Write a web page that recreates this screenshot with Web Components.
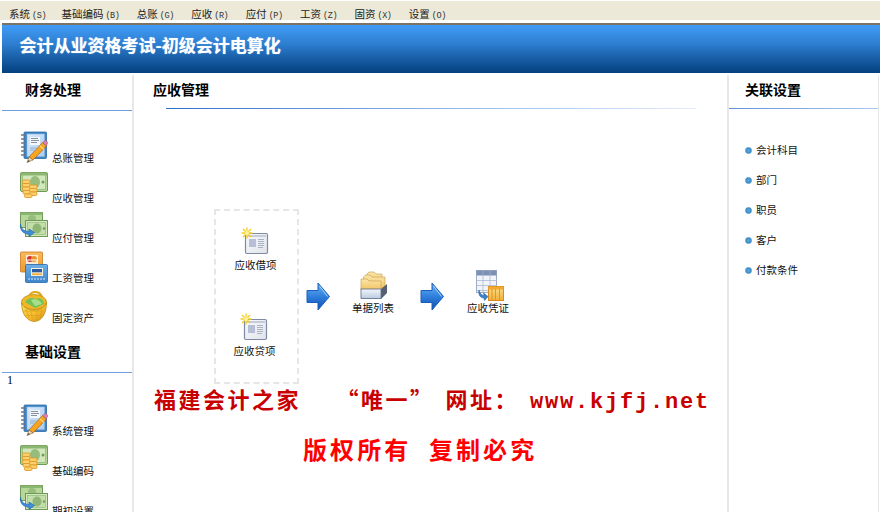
<!DOCTYPE html>
<html lang="zh-CN"><head><meta charset="utf-8"><title>会计从业资格考试</title>
<style>
html,body{margin:0;padding:0;background:#fff;width:880px;height:512px;overflow:hidden}
body{font-family:"Noto Sans CJK SC","Liberation Sans",sans-serif;color:#000}
</style></head><body>
<app-shell>
  <app-menubar slot="menu">
    <menu-entry key="S">系统</menu-entry><menu-entry key="B">基础编码</menu-entry><menu-entry key="G">总账</menu-entry><menu-entry key="R">应收</menu-entry><menu-entry key="P">应付</menu-entry><menu-entry key="Z">工资</menu-entry><menu-entry key="X">固资</menu-entry><menu-entry key="O">设置</menu-entry>
  </app-menubar>
  <app-banner slot="banner">会计从业资格考试-初级会计电算化</app-banner>
  <side-nav slot="left">
    <nav-section heading="财务处理" first>
      <nav-item icon="notebook">总账管理</nav-item>
      <nav-item icon="coins">应收管理</nav-item>
      <nav-item icon="transfer">应付管理</nav-item>
      <nav-item icon="cards">工资管理</nav-item>
      <nav-item icon="basket">固定资产</nav-item>
    </nav-section>
    <nav-section heading="基础设置" marker="1">
      <nav-item icon="notebook">系统管理</nav-item>
      <nav-item icon="coins">基础编码</nav-item>
      <nav-item icon="transfer">期初设置</nav-item>
    </nav-section>
  </side-nav>
  <work-area slot="center" heading="应收管理">
    <flow-diagram>
      <flow-group>
        <flow-node icon="newdoc" class="first">应收借项</flow-node>
        <flow-node icon="newdoc" class="second">应收贷项</flow-node>
      </flow-group>
      <flow-arrow class="a1"></flow-arrow>
      <flow-node icon="folders" class="n1">单据列表</flow-node>
      <flow-arrow class="a2"></flow-arrow>
      <flow-node icon="voucher" class="n2">应收凭证</flow-node>
    </flow-diagram>
    <notice-text>
      <span slot="one">福建会计之家　  “唯一”  网址：  </span><span slot="url">www.kjfj.net</span>
      <span slot="two">版权所有 复制必究</span>
    </notice-text>
  </work-area>
  <link-panel slot="right" heading="关联设置">
    <link-item>会计科目</link-item>
    <link-item>部门</link-item>
    <link-item>职员</link-item>
    <link-item>客户</link-item>
    <link-item>付款条件</link-item>
  </link-panel>
</app-shell>
<script>
const CJK='"Noto Sans CJK SC","Liberation Sans",sans-serif';
const ICONS={
notebook:`<defs><linearGradient id="p" x1="0" y1="0" x2="1" y2="1"><stop offset="0" stop-color="#dcebfb"/><stop offset="1" stop-color="#a9cdf0"/></linearGradient></defs>
<rect x="5" y="1" width="22.5" height="26.5" rx="1" fill="#3d84c8" stroke="#2f6aa6" stroke-width=".8"/>
<rect x="8" y="3" width="17.5" height="22.5" fill="url(#p)" stroke="#8db8e2" stroke-width=".6"/>
<rect x="11" y="6" width="10" height="8" fill="#f4f8fd"/>
<path d="M12 7.5h7M12 9.5h8M12 11.5h6" stroke="#7b8794" stroke-width=".9"/>
<path d="M11 17h6M11 19h4" stroke="#8aa6c4" stroke-width=".8"/>
<path d="M2.5 4h4M2.5 8h4M2.5 12h4M2.5 16h4M2.5 20h4M2.5 24h4" stroke="#6c7684" stroke-width="1.3" stroke-linecap="round"/>
<path d="M23.5 11.5L27.5 15L14 29L10 26Z" fill="#f6a51f" stroke="#a9621a" stroke-width=".7"/>
<path d="M21 15L25 18.3" stroke="#fde08a" stroke-width="1.1"/>
<path d="M23.5 11.5L25 10.2C26 9.4 27.3 9.6 28 10.4C28.8 11.4 28.7 12.6 28 13.4L27.5 15Z" fill="#d982ad" stroke="#a45b80" stroke-width=".6"/>
<path d="M10 26L14 29L8 31.5Z" fill="#f2dcae" stroke="#8c6a3c" stroke-width=".6"/><path d="M8 31.5l1.8-2.4 1 .8z" fill="#333"/>`,
coins:`<rect x="1.5" y="1.5" width="27" height="19" rx="1.5" fill="#b6d69a" stroke="#6e9a58"/>
<rect x="3.5" y="3.5" width="23" height="15" fill="#d2e7bb" stroke="#8db574" stroke-width=".7"/>
<rect x="1.5" y="1.5" width="27" height="3" fill="#8cb772"/>
<ellipse cx="16" cy="11" rx="5" ry="6" fill="#97bd7e"/><circle cx="24" cy="11" r="1.5" fill="#6f9a58"/>
<g fill="#fcd06a" stroke="#e09326" stroke-width=".8"><rect x="3.5" y="9" width="7.5" height="3.5" rx="1.2"/><rect x="3.5" y="12.5" width="7.5" height="3.5" rx="1.2"/><rect x="3.5" y="16" width="7.5" height="3.5" rx="1.2"/><rect x="4" y="19.5" width="7.5" height="3.5" rx="1.2"/><rect x="10.5" y="14" width="7.5" height="3.5" rx="1.2"/><rect x="10.5" y="17.5" width="7.5" height="3.5" rx="1.2"/><rect x="10.5" y="21" width="7.5" height="3.5" rx="1.2"/><rect x="5.5" y="23" width="7.5" height="3.5" rx="1.2"/></g>`,
transfer:`<rect x="1.5" y="1.5" width="22" height="15" fill="#b6d69a" stroke="#6e9a58"/>
<rect x="1.5" y="1.5" width="22" height="2.5" fill="#8cb772"/>
<ellipse cx="13" cy="8" rx="4" ry="4" fill="#97bd7e"/>
<rect x="6.5" y="9.5" width="22" height="16" fill="#d2e7bb" stroke="#6e9a58"/>
<rect x="8.5" y="11.5" width="18" height="12" fill="#c4deaa" stroke="#8db574" stroke-width=".6"/>
<ellipse cx="18" cy="17.5" rx="4.5" ry="5" fill="#8fb676"/><circle cx="25" cy="17.5" r="1.2" fill="#6f9a58"/>
<path d="M1.5 13C2 18.5 6 20.5 10 20.5V18L15.5 21.5L10 25.5V23C5 23 .5 20 1.5 13Z" fill="#3f8fdc" stroke="#2568ad" stroke-width=".7"/>`,
cards:`<defs><linearGradient id="o" x1="0" y1="0" x2="0" y2="1"><stop offset="0" stop-color="#fbb95c"/><stop offset="1" stop-color="#ee9a2c"/></linearGradient><linearGradient id="b" x1="0" y1="0" x2="0" y2="1"><stop offset="0" stop-color="#6fb0ea"/><stop offset="1" stop-color="#3d85cc"/></linearGradient></defs>
<rect x="1.5" y="1" width="22" height="20" rx="1" fill="url(#o)" stroke="#c77a1c" stroke-width=".8"/>
<rect x="7" y="4" width="12" height="9" fill="#f8e9d2"/><circle cx="11" cy="8" r="3" fill="#d4312a"/><circle cx="15" cy="8" r="3" fill="#e9932b"/>
<path d="M7 9h12" stroke="#fff" stroke-width="1"/>
<rect x="6.5" y="13.5" width="22" height="18" rx="1" fill="url(#b)" stroke="#2b6aa8" stroke-width=".8"/>
<rect x="12" y="17" width="12" height="8" fill="#f6f1df"/><rect x="13" y="18" width="10" height="3.3" fill="#2c5aa0"/><rect x="13" y="22.3" width="10" height="1.8" fill="#f1b13c"/>
<path d="M9 28h17" stroke="#d9ebfa" stroke-width="1" stroke-dasharray="2 1"/>`,
basket:`<defs><linearGradient id="y" x1="0" y1="0" x2="1" y2="1"><stop offset="0" stop-color="#fde25c"/><stop offset=".6" stop-color="#f5b82a"/><stop offset="1" stop-color="#c98a14"/></linearGradient></defs>
<path d="M9 10C9.5 3.5 13 1 16 1C20 1 23.5 4 24 11" fill="none" stroke="#e2a818" stroke-width="2.2"/>
<ellipse cx="15" cy="11" rx="12.5" ry="7.5" fill="#eeb826" stroke="#c08c14" stroke-width=".8"/>
<path d="M6 11C9 6 14 6.5 17 8C21 6 25 9 25 13L16 17Z" fill="#74c15a"/><path d="M12 9C16 7 21 9 23 13L16 15Z" fill="#a8e08a"/>
<path d="M2.5 12C3 22 6.5 29.5 15 30.5C23 30.5 27.500 22 27.5 11.5C25 17 20 19 15 19C9 19 5 16.5 2.500 12Z" fill="url(#y)" stroke="#c08c14" stroke-width=".8"/>
<path d="M7 18L10 27M12 19.5L13.5 29M18 19.5L17.5 29M23 17.5L21 27M4.5 20L24 20M6.5 24.5L23 24.5" stroke="#d99e1a" stroke-width=".6" fill="none"/>`,
newdoc:`<defs><linearGradient id="d" x1="0" y1="0" x2="1" y2="1"><stop offset="0" stop-color="#f9fafc"/><stop offset="1" stop-color="#dfe3ea"/></linearGradient></defs>
<rect x="5.5" y="7.5" width="22" height="20" rx="1.5" fill="url(#d)" stroke="#7f8aa3" stroke-width="1.2"/>
<rect x="7" y="9" width="19" height="2" fill="#c6ccda"/>
<rect x="9" y="13" width="7" height="8" fill="#b7bfd6"/>
<path d="M18 13.5h6M18 15.5h6M18 17.5h6M18 19.5h6M18 21.5h5" stroke="#9aa2b6" stroke-width=".8"/>
<g stroke="#f6cf1d" stroke-width="1.3"><path d="M7 1.5V12.5M1.5 7H12.5M3 3L11 11M11 3L3 11"/></g><circle cx="7" cy="7" r="2" fill="#fff3a8"/>`,
folders:`<defs><linearGradient id="f" x1="0" y1="0" x2="0" y2="1"><stop offset="0" stop-color="#fbe6a8"/><stop offset="1" stop-color="#f3c262"/></linearGradient><linearGradient id="t" x1="0" y1="0" x2="0" y2="1"><stop offset="0" stop-color="#f2f6fc"/><stop offset="1" stop-color="#bccbe0"/></linearGradient></defs>
<path d="M10 7V5L12 3H17L19 5H25V17H10Z" fill="url(#f)" stroke="#c9a45a" stroke-width=".7"/>
<path d="M6.5 10V8L8.5 6H13L15 8H28V19H6.5Z" fill="url(#f)" stroke="#c9a45a" stroke-width=".7"/>
<path d="M4 12V10H10L12 12H24V21H4Z" fill="url(#f)" stroke="#c9a45a" stroke-width=".7"/>
<path d="M24 20L30 15V24L24 30Z" fill="#566070"/>
<rect x="4" y="20" width="20" height="9.5" fill="url(#t)" stroke="#5a6c88" stroke-width=".8"/>`,
voucher:`<defs><linearGradient id="g" x1="0" y1="0" x2="0" y2="1"><stop offset="0" stop-color="#fbe18a"/><stop offset="1" stop-color="#f2ae3a"/></linearGradient></defs>
<rect x="4.5" y="1.5" width="20" height="22" fill="#f1f4fa" stroke="#8c9bb8" stroke-width=".8"/>
<rect x="4.5" y="1.5" width="20" height="5" fill="#7d90b5"/>
<path d="M4.5 11.5h20M4.5 16.5h20M4.5 21.5h20M11 1.5v22M18 1.5v22" stroke="#a6b2ca" stroke-width=".7" fill="none"/>
<rect x="16.5" y="17.5" width="15" height="14" fill="url(#g)" stroke="#dc8a1c"/>
<rect x="16.5" y="17.5" width="15" height="3" fill="#f4a82e"/>
<path d="M20 20v11M23.5 20v11M27.5 20v11" stroke="#e28f20" stroke-width=".9"/>
<path d="M7 21C8 25 10.5 26.5 12 26.5L11.5 24L16 27.5L12.5 31.5L12 29C8.5 29 6 26 7 21Z" fill="#3b82cc" stroke="#28639f" stroke-width=".6"/>`
};
customElements.define('app-icon',class extends HTMLElement{
  static get observedAttributes(){return ['name']}
  constructor(){super();this.attachShadow({mode:'open'}).innerHTML='<style>:host{display:block;width:32px;height:32px;flex:none}svg{display:block}</style><svg width="32" height="32" viewBox="0 0 32 32" aria-hidden="true"></svg>'}
  attributeChangedCallback(n,o,v){this.shadowRoot.querySelector('svg').innerHTML=ICONS[v]||''}
});
function def(name,css,html,extra){
  const t=document.createElement('template');
  t.innerHTML=`<style>${css}</style>${html}`;
  customElements.define(name,class extends HTMLElement{
    connectedCallback(){
      if(this.shadowRoot)return;
      this.attachShadow({mode:'open'}).appendChild(t.content.cloneNode(true));
      if(extra)extra(this,this.shadowRoot);
    }
  });
}
def('app-shell',`:host{display:flex;flex-direction:column;width:880px;height:512px;overflow:hidden}
.row{display:flex;flex:1;min-height:0;padding:2px 0 0 2px}`,
`<slot name="menu"></slot><slot name="banner"></slot><div class="row"><slot name="left"></slot><slot name="center"></slot><slot name="right"></slot></div>`);
def('app-menubar',`:host{display:flex;box-sizing:border-box;height:19px;margin-top:1px;background:#ece9d8;padding:5.5px 0 0 9px;gap:17.3px;align-items:flex-start}
::slotted(:first-child){margin-right:-2px}`,'<slot></slot>');
def('menu-entry',`:host{display:flex;align-items:baseline;font:10.5px/14px ${CJK};color:#222;white-space:nowrap}
i{font:normal 8.5px/14px "Liberation Mono",monospace;margin-left:2px;letter-spacing:-.4px;color:#333}`,
'<slot></slot><i></i>',(h,s)=>{s.querySelector('i').textContent='('+h.getAttribute('key')+')'});
def('app-banner',`:host{display:flex;align-items:center;box-sizing:border-box;height:50px;margin:3px 0 0 2px;padding:0 0 8px 17.5px;border-top:2px solid #7d7364;
background:linear-gradient(#429cf7 0,#2c7ecf 40%,#1a5fa8 68%,#03417f 100%);color:#fff;font:700 17px/24px ${CJK};text-shadow:0 0 1px #bcdcff;white-space:nowrap}`,'<slot></slot>');
def('side-nav',`:host{display:block;box-sizing:border-box;width:132px;flex:none;border-right:2px solid #e8e8e8;overflow:hidden}`,'<slot></slot>');
def('nav-section',`:host{display:block}
.head{box-sizing:border-box;height:35.5px;padding:5px 0 0 23px;font:700 14px/18px ${CJK};color:#000;border-bottom:1px solid #6f9fe0}
:host(:not([first])) .head{height:37px;margin-top:11px;padding-top:6px}
.mark{font:12px/14px "Liberation Serif",serif;padding-left:5px;height:14px}
.mark:empty{display:none}
.body{padding:20px 0 0 17px}
:host(:not([first])) .body{padding-top:17px}`,
`<div class="head"></div><div class="mark"></div><div class="body"><slot></slot></div>`,
(h,s)=>{s.querySelector('.head').textContent=h.getAttribute('heading');s.querySelector('.mark').textContent=h.getAttribute('marker')||''});
def('nav-item',`:host{display:flex;align-items:flex-end;height:34px;margin-bottom:6px;font:10.5px/14px ${CJK};color:#111}
app-icon{margin-bottom:2px;margin-right:1px}`,'<app-icon></app-icon><slot></slot>',(h,s)=>{s.querySelector('app-icon').setAttribute('name',h.getAttribute('icon'));});
def('work-area',`:host{display:block;flex:1;min-width:0}
.head{height:33px;padding:5px 0 0 19px;box-sizing:border-box;font:700 14px/18px ${CJK}}
.rule{height:1px;margin:0 31px 0 32px;background:linear-gradient(90deg,#2f6fc8,#8fb8ee 55%,#e3edfb)}`,
`<div class="head"></div><div class="rule"></div><slot></slot>`,(h,s)=>{s.querySelector('.head').textContent=h.getAttribute('heading')});
def('flow-diagram',`:host{display:flex;align-items:flex-start;margin:100px 0 0 80px;height:175px}
::slotted(.a1){margin:73px 0 0 7px}
::slotted(.n1){margin:60px 0 0 20px}
::slotted(.a2){margin:73px 0 0 25px}
::slotted(.n2){margin:60px 0 0 21px}`,'<slot></slot>');
def('flow-group',`:host{display:flex;flex-direction:column;align-items:center;gap:40px;box-sizing:border-box;width:85px;height:175px;padding-top:15px;border:2px dashed #e6e6e6}
::slotted(.first){margin-left:-2px}
::slotted(.second){margin-left:-4px}`,'<slot></slot>');
def('flow-node',`:host{display:flex;flex-direction:column;align-items:center;width:44px;font:10.5px/14px ${CJK};color:#111;white-space:nowrap}`,'<app-icon></app-icon><slot></slot>',(h,s)=>{s.querySelector('app-icon').setAttribute('name',h.getAttribute('icon'))});
def('flow-arrow',`:host{display:block;width:25px;height:29px;flex:none}svg{display:block}`,
`<svg width="25" height="29" viewBox="0 0 25 29"><defs><linearGradient id="a" x1="0" y1="0" x2="0" y2="1"><stop offset="0" stop-color="#6db3f2"/><stop offset=".5" stop-color="#2f7fdc"/><stop offset="1" stop-color="#0f4fb0"/></linearGradient></defs><path d="M1 8.5H12V1L23.5 14.5L12 28V20.5H1Z" fill="url(#a)" stroke="#1a5fbd" stroke-width="1"/><path d="M13.5 4L21.5 14.5" stroke="#a6d4fb" stroke-width="1"/></svg>`);
def('notice-text',`:host{display:block;margin-top:-1px;white-space:pre;font-weight:700}
.a,.b{display:block}
.a{padding-left:20px;font:700 22px/30px ${CJK};letter-spacing:2.5px;word-spacing:-2px;color:#c80000;height:30px}
.u{font-family:"Liberation Mono",monospace;letter-spacing:1.8px}
.b{padding-left:169px;margin-top:23px;font:700 24px/34px "Liberation Mono","Noto Sans CJK SC",monospace;letter-spacing:3.1px;color:#f00}`,
`<div class="a"><slot name="one"></slot><span class="u"><slot name="url"></slot></span></div><div class="b"><slot name="two"></slot></div>`);
def('link-panel',`:host{display:block;box-sizing:border-box;width:152px;margin-right:1px;flex:none;border-left:2px solid #e8e8e8;border-right:1px solid #e8e8e8}
.head{box-sizing:border-box;height:33px;padding:5px 0 0 16px;font:700 14px/18px ${CJK}}
.rule{height:1px;background:linear-gradient(90deg,#5f92dc,#a9c6ee)}
.list{padding:26px 0 0 16px}`,
`<div class="head"></div><div class="rule"></div><div class="list"><slot></slot></div>`,(h,s)=>{s.querySelector('.head').textContent=h.getAttribute('heading')});
def('link-item',`:host{display:flex;align-items:center;height:30px;font:10.5px/14px ${CJK};color:#111}
b{display:block;box-sizing:border-box;width:7px;height:7px;margin-right:4px;border-radius:50%;background:radial-gradient(circle,#5fa8dc,#2a83c4);border:1px solid #4b94c8}`,'<b></b><slot></slot>');
</script>
</body></html>
